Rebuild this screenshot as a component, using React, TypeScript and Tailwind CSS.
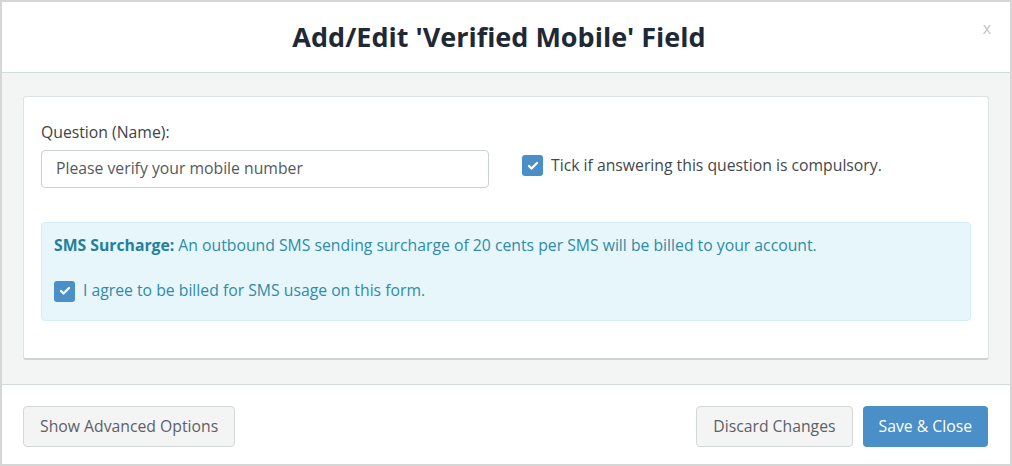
import { Check } from "lucide-react";

function Tick() {
  return (
    <span className="flex h-[21px] w-[21px] shrink-0 items-center justify-center rounded-[3px] bg-[#4a8fc7]">
      <Check className="h-3 w-3 text-white" strokeWidth={4.5} />
    </span>
  );
}

export default function App() {
  return (
    <div className="h-[466px] w-[1012px] font-['Open_Sans',sans-serif]">
      <div className="flex h-full flex-col border-2 border-[#d6d6d6] bg-white">
        {/* header */}
        <div className="relative flex h-[71px] shrink-0 items-center justify-center border-b border-[#d3dcdc] pr-[14px]">
          <h2 className="text-[27px] font-bold text-[#1f2935]">
            Add/Edit 'Verified Mobile' Field
          </h2>
          <span className="absolute right-[19px] top-[14px] text-[16px] text-[#c4c4c4]">x</span>
        </div>

        {/* body */}
        <div className="flex-1 bg-[#f3f5f4] px-[21px] pt-[23px]">
          <div className="h-[264px] rounded-[3px] border border-[#dde2e2] border-b-2 border-b-[#cdd3d3] bg-white px-[17px] pt-[24px]">
            <div className="flex items-end">
              <div className="w-[448px]">
                <label className="block text-[15.75px] text-[#3d4247]">Question (Name):</label>
                <div className="mt-[5px] flex h-[38px] items-center rounded-[4px] border border-[#ccd1d4] px-[14px] text-[15.75px] text-[#55595d]">
                  Please verify your mobile number
                </div>
              </div>
              <div className="mb-[10px] ml-[33px] flex items-center gap-[8px]">
                <Tick />
                <span className="text-[15.75px] text-[#43484d]">
                  Tick if answering this question is compulsory.
                </span>
              </div>
            </div>

            <div className="mt-[34px] h-[99px] rounded-[4px] border border-[#d2eef6] bg-[#e7f6fb] px-[12px] pt-[11px] text-[15.75px] text-[#2f8ba8]">
              <p>
                <b className="font-bold text-[#23809c]">SMS Surcharge:</b> An outbound SMS sending
                surcharge of 20 cents per SMS will be billed to your account.
              </p>
              <div className="mt-[22px] flex items-center gap-[8px]">
                <Tick />
                <span>I agree to be billed for SMS usage on this form.</span>
              </div>
            </div>
          </div>
        </div>

        {/* footer */}
        <div className="flex h-[80px] shrink-0 items-center justify-between border-t border-[#d3dcdc] pl-[21px] pr-[22px] pt-[4px]">
          <button className="h-[41px] rounded-[4px] border border-[#d2d8d8] bg-[#f4f4f4] px-[16px] text-[15.75px] text-[#5c6166]">
            Show Advanced Options
          </button>
          <div className="flex gap-[10px]">
            <button className="h-[41px] rounded-[4px] border border-[#d2d8d8] bg-[#f4f4f4] px-[16px] text-[15.75px] text-[#5c6166]">
              Discard Changes
            </button>
            <button className="h-[41px] rounded-[4px] bg-[#4a8fc7] px-[16px] text-[15.75px] text-white">
              Save &amp; Close
            </button>
          </div>
        </div>
      </div>
    </div>
  );
}
